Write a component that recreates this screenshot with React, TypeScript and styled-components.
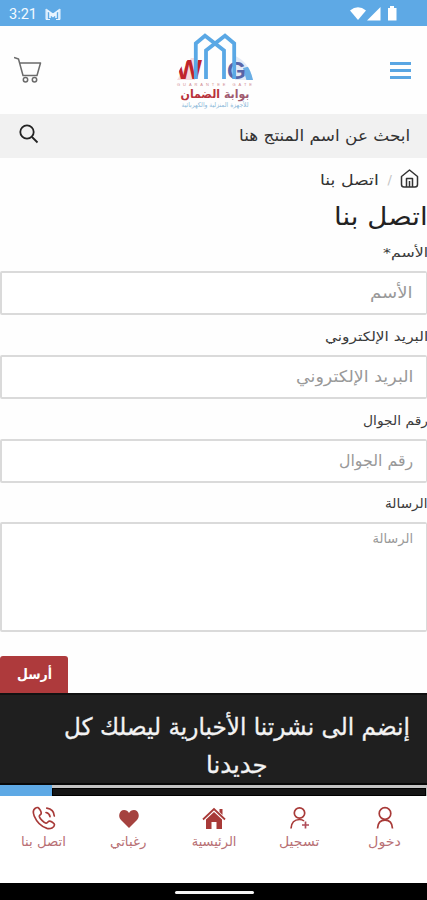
import React, { useLayoutEffect, useRef, useState } from 'react';
import styled, { createGlobalStyle } from 'styled-components';

const Global = createGlobalStyle`
  *, *::before, *::after { box-sizing: border-box; }
  body { margin: 0; background: #fff; font-family: "DejaVu Sans", "Noto Sans", sans-serif; }
`;

const Screen = styled.div`
  width: 427px;
  height: 900px;
  display: flex;
  flex-direction: column;
  overflow: hidden;
  background: #fefefe;
`;

const FitBox = styled.span<{ $w: number }>`
  display: flex;
  width: ${p => p.$w}px;
  flex: none;
`;
const FitInner = styled.span`
  display: block;
  flex: none;
  white-space: nowrap;
  transform-origin: right center;
`;

/* One line of text condensed or widened to an exact width. */
function Fit({ w, children }: { w: number; children: React.ReactNode }) {
  const ref = useRef<HTMLSpanElement>(null);
  const [k, setK] = useState(1);
  useLayoutEffect(() => {
    if (ref.current) setK(w / ref.current.offsetWidth);
  }, [w]);
  return (
    <FitBox $w={w} dir="rtl">
      <FitInner ref={ref} style={{ transform: `scaleX(${k})` }}>{children}</FitInner>
    </FitBox>
  );
}

const StatusBar = styled.div`
  height: 26px;
  flex: none;
  background: #5ea9e5;
  color: #f4faff;
  display: flex;
  align-items: center;
  justify-content: space-between;
  padding: 2px 29px 0 9px;
  font: 14px/20px Roboto, sans-serif;
`;
const StatusGroup = styled.div`
  display: flex;
  align-items: center;
  gap: 8px;
`;

const Header = styled.header`
  height: 88px;
  flex: none;
  display: flex;
  justify-content: space-between;
  align-items: center;
  padding: 0 16px 0 14px;
`;
const LogoSlot = styled.div`
  height: 80px;
  margin-left: -3px;
`;

const SearchBar = styled.div`
  height: 44px;
  flex: none;
  background: #f1f1f1;
  display: flex;
  align-items: center;
  justify-content: space-between;
  padding: 0 17px 1px 19px;
  font-size: 16px;
  line-height: 24px;
  color: #333;
`;
const SearchIcon = styled.svg`
  margin-bottom: 4px;
`;

const Crumbs = styled.nav`
  height: 42px;
  flex: none;
  display: flex;
  direction: rtl;
  align-items: center;
  padding: 1px 8px 0 0;
  gap: 9px;
  font-size: 15px;
  line-height: 20px;
  color: #333;
`;
const HomeIcon = styled.svg`
  margin-bottom: 3px;
`;
const Slash = styled.span`
  color: #c4c4c4;
  font-size: 13px;
  margin-right: -1px;
`;

const Title = styled.h1`
  margin: 0 -1px 0 0;
  height: 34px;
  flex: none;
  direction: rtl;
  display: flex;
  align-items: center;
  font-size: 25px;
  line-height: 34px;
  font-weight: 400;
  color: #222;
`;

const Field = styled.label<{ $h: number }>`
  height: ${p => p.$h}px;
  flex: none;
  display: flex;
  flex-direction: column;
  justify-content: flex-end;
  direction: rtl;
`;
const Label = styled.span`
  font-size: 13px;
  line-height: 20px;
  color: #3a3a3a;
  margin-bottom: 8px;
  margin-right: -1px;
`;
const Control = styled.span<{ $area?: boolean }>`
  height: ${p => (p.$area ? 110 : 44)}px;
  border: 2px solid #dadada;
  border-right-width: 1px;
  border-radius: 2px;
  background: #fff;
  display: flex;
  align-items: ${p => (p.$area ? 'flex-start' : 'center')};
  padding: ${p => (p.$area ? '4px 13px 0 0' : '0 13px 1px 0')};
  font-size: ${p => (p.$area ? 13 : 16)}px;
  line-height: 22px;
  color: #999;
`;

const Send = styled.button`
  margin: 24px 0 0;
  width: 68px;
  height: 37px;
  flex: none;
  border: 0;
  border-radius: 3px 3px 0 0;
  background: #ae3a3c;
  color: #fff;
  font: bold 14px/20px "DejaVu Sans", sans-serif;
  display: flex;
  align-items: center;
  justify-content: center;
  padding: 0 0 1px 1px;
`;

const Newsletter = styled.section`
  height: 92px;
  flex: none;
  background: #1f1f1f;
  border-top: 2px solid #111;
  border-bottom: 2px solid #080808;
  display: flex;
  flex-direction: column;
  align-items: center;
  padding: 13px 0 0 46px;
  font-size: 24px;
  line-height: 38px;
  color: #f3f3f3;
  -webkit-text-stroke: 0.3px #f3f3f3;
`;
const NewsLine = styled.div<{ $w: number }>`
  width: ${p => p.$w}px;
  height: 38px;
`;

const Progress = styled.div`
  height: 11px;
  flex: none;
  display: grid;
  grid-template-columns: 52px 1fr;
  padding-right: 1px;
  background: #c3c3c3;
`;
const ProgressDone = styled.div`
  background: #5ea9e5;
`;
const ProgressRest = styled.div`
  margin-top: 3px;
  background: #151515;
  border: 1px solid #000;
`;

const TabBar = styled.nav`
  height: 87px;
  flex: none;
  background: #fff;
  display: grid;
  grid-template-columns: repeat(5, 1fr);
  padding: 9px 0 0 1px;
`;
const Tab = styled.div`
  display: flex;
  flex-direction: column;
  align-items: center;
  gap: 1px;
  font-size: 13px;
  line-height: 20px;
  color: #b87074;
`;

const GestureBar = styled.div`
  height: 17px;
  flex: none;
  background: #000;
  display: flex;
  justify-content: center;
  padding: 8px 0 0 2px;
`;
const Pill = styled.div`
  width: 79px;
  height: 3px;
  border-radius: 2px;
  background: #f4f4f4;
`;

function Logo() {
  return (
    <svg width="80" height="80" viewBox="0 0 80 80">
      <defs>
        <clipPath id="dome">
          <path d="M1 50Q5 31 22 25H58Q74 31 78 50Z" />
        </clipPath>
      </defs>
      <g clipPath="url(#dome)">
        <path d="M60 20H80V52H60Z" fill="#e3eaf6" />
        <path d="M2 50L16 28H20V50Z" fill="#f6dcdd" />
        <path d="M68 38L80 35V52H72Z" fill="#69aee5" />
        <text x="1" y="49" fontFamily="Liberation Sans" fontWeight="700" fontSize="28" textLength="26" lengthAdjust="spacingAndGlyphs" fill="#c0242b">W</text>
        <text x="52" y="48.500" fontFamily="Liberation Sans" fontWeight="700" fontSize="23" textLength="19" lengthAdjust="spacingAndGlyphs" fill="#5865a8">G</text>
      </g>
      <path d="M31 49V21L40 14L49 21V49Z" fill="#fefefe" />
      <g fill="none" stroke="#5aa8e5" strokeWidth="3.800">
        <path d="M20.800 49V13.500L30 5.800L49 20.500V49" />
        <path d="M59.200 49V13.500L50 5.800L31 20.500V49" />
      </g>
      <text x="2" y="55.500" fontFamily="Liberation Sans" fontSize="4" textLength="75" fill="#d08a90">GUARANTEE GATE</text>
      <text x="40" y="68" textAnchor="middle" direction="rtl" fontFamily="DejaVu Sans" fontWeight="700" fontSize="11.500" textLength="69" lengthAdjust="spacingAndGlyphs" fill="#a05a70"><tspan>بوابة </tspan><tspan fill="#b8323b">الضمان</tspan></text>
      <text x="40" y="77" textAnchor="middle" direction="rtl" fontFamily="DejaVu Sans" fontSize="6.500" textLength="67" lengthAdjust="spacingAndGlyphs" fill="#89b7d8">للأجهزة المنزلية والكهربائية</text>
    </svg>
  );
}

const red = '#a83a38';
const tabIcons: Record<string, React.ReactNode> = {
  user: (
    <g fill="none" stroke={red} strokeWidth="1.700">
      <circle cx="14" cy="8.500" r="5.800" />
      <path d="M6.500 23.500C6.800 18 9.500 15.200 14 15.200S21.200 18 21.500 23.500" />
    </g>
  ),
  add: (
    <g fill="none" stroke={red} strokeWidth="1.700">
      <circle cx="13.500" cy="8" r="5.200" />
      <path d="M5 23.500C5.300 18 8.500 14.500 13.500 14.500c2 0 3.500.5 4.500 1.500" />
      <path d="M19.500 16.500v7M16 20h7" stroke="#b04c58" />
    </g>
  ),
  home: (
    <g>
      <path d="M18.500 4H21.500V10L18.500 7Z" fill={red} />
      <path d="M2 14.500L13 4L24 14.500" fill="none" stroke={red} strokeWidth="1.800" />
      <path d="M5 14.500L13 7L21 14.500V24H15.500V17H10.500V24H5Z" fill={red} />
    </g>
  ),
  heart: <path d="M13 23L5 15C1.500 11.500 3.500 5 8 5c2.300 0 4 1.200 5 3 1-1.800 2.700-3 5-3 4.500 0 6.500 6.500 3 10Z" fill="#a5423f" />,
  phone: (
    <g fill="none" stroke={red} strokeWidth="1.700" strokeLinecap="round" strokeLinejoin="round">
      <path d="M4 3.500C2 5 1.800 7.500 3.200 11C5.300 16 10 21.500 16 23.400C19.500 24.300 23.300 22.500 23.500 19.800C23.600 18.200 19.500 15.900 18.200 16.200C16.800 16.500 16.300 18.300 15 18.200C12.500 17.500 9 13.800 8.300 11.500C8 10.200 9.800 9.800 10.200 8.400C10.600 7 8.300 3 7 2.600C6 2.300 4.800 2.900 4 3.500Z" />
      <path d="M15 7.500C17.500 8 18.700 9.300 19 11.700M15.800 3.200C20.500 3.800 23 6.500 23.300 11" />
    </g>
  ),
};

const tabs = [
  { icon: 'phone', text: 'اتصل بنا', w: 45 },
  { icon: 'heart', text: 'رغباتي', w: 36 },
  { icon: 'home', text: 'الرئيسية', w: 45 },
  { icon: 'add', text: 'تسجيل', w: 40 },
  { icon: 'user', text: 'دخول', w: 33 },
];

const fields = [
  { label: 'الأسم*', lw: 45, hint: 'الأسم', hw: 43, h: 81 },
  { label: 'البريد الإلكتروني', lw: 103, hint: 'البريد الإلكتروني', hw: 117, h: 84 },
  { label: 'رقم الجوال', lw: 65, hint: 'رقم الجوال', hw: 74, h: 84 },
  { label: 'الرسالة', lw: 43, hint: 'الرسالة', hw: 41, h: 149, area: true },
];

export default function App() {
  return (
    <Screen>
      <Global />
      <StatusBar>
        <StatusGroup>
          <Fit w={28}>3:21</Fit>
          <svg width="16" height="13" viewBox="0 0 16 13" fill="none" stroke="#e8f4ff">
            <path d="M2 11V2L8 6.500L14 2V11M5 10V6L8 8.500L11 6V10" strokeWidth="1.600" />
            <path d="M1 1V11.500H5M15 1V11.500H11" />
          </svg>
        </StatusGroup>
        <svg width="49" height="16" viewBox="0 0 49 16" fill="#fff">
          <path d="M1 4.500Q9-2 17 4.500L9 14Z" />
          <path d="M18 14.500L31.500 1V14.500Z" />
          <path d="M39 2h2V0h4v2h2.500V14.500H39Z" />
        </svg>
      </StatusBar>
      <Header>
        <svg width="28" height="28" viewBox="0 0 28 28" fill="none" stroke="#6b6b6b" strokeWidth="1.500">
          <path d="M0 1.500L4.500 3L9 19.500H23L26.500 7H6" strokeLinejoin="round" />
          <circle cx="11.500" cy="23.800" r="2.200" />
          <circle cx="20.500" cy="23.800" r="2.200" />
        </svg>
        <LogoSlot><Logo /></LogoSlot>
        <svg width="21" height="19" viewBox="0 0 21 19" stroke="#59a6e3" strokeWidth="3">
          <path d="M0 2.500H21M0 9.500H21M0 16.500H21" />
        </svg>
      </Header>
      <SearchBar>
        <SearchIcon width="20" height="20" viewBox="0 0 20 20" fill="none" stroke="#222" strokeWidth="1.800">
          <circle cx="8" cy="8" r="6.700" />
          <path d="M13 13L18.500 18.500" />
        </SearchIcon>
        <Fit w={171}>ابحث عن اسم المنتج هنا</Fit>
      </SearchBar>
      <Crumbs>
        <HomeIcon width="19" height="19" viewBox="0 0 19 19" fill="none" stroke="#333" strokeWidth="1.500" strokeLinejoin="round">
          <path d="M1.500 7.500L9.500 1L17.500 7.500V15.500Q17.500 18 15 18H4Q1.500 18 1.500 15.500Z" />
          <path d="M6.500 18V9.500H12.500V18M9.500 12V18" />
        </HomeIcon>
        <Slash>/</Slash>
        <Fit w={59}>اتصل بنا</Fit>
      </Crumbs>
      <Title><Fit w={94}>اتصل بنا</Fit></Title>
      {fields.map(f => (
        <Field key={f.label} $h={f.h}>
          <Label><Fit w={f.lw}>{f.label}</Fit></Label>
          <Control $area={f.area}><Fit w={f.hw}>{f.hint}</Fit></Control>
        </Field>
      ))}
      <Send><Fit w={35}>أرسل</Fit></Send>
      <Newsletter>
        <NewsLine $w={346}><Fit w={346}>إنضم الى نشرتنا الأخبارية ليصلك كل</Fit></NewsLine>
        <NewsLine $w={62}><Fit w={62}>جديدنا</Fit></NewsLine>
      </Newsletter>
      <Progress>
        <ProgressDone />
        <ProgressRest />
      </Progress>
      <TabBar>
        {tabs.map(t => (
          <Tab key={t.icon}>
            <svg width="26" height="26" viewBox="0 0 26 26">{tabIcons[t.icon]}</svg>
            <Fit w={t.w}>{t.text}</Fit>
          </Tab>
        ))}
      </TabBar>
      <GestureBar><Pill /></GestureBar>
    </Screen>
  );
}
